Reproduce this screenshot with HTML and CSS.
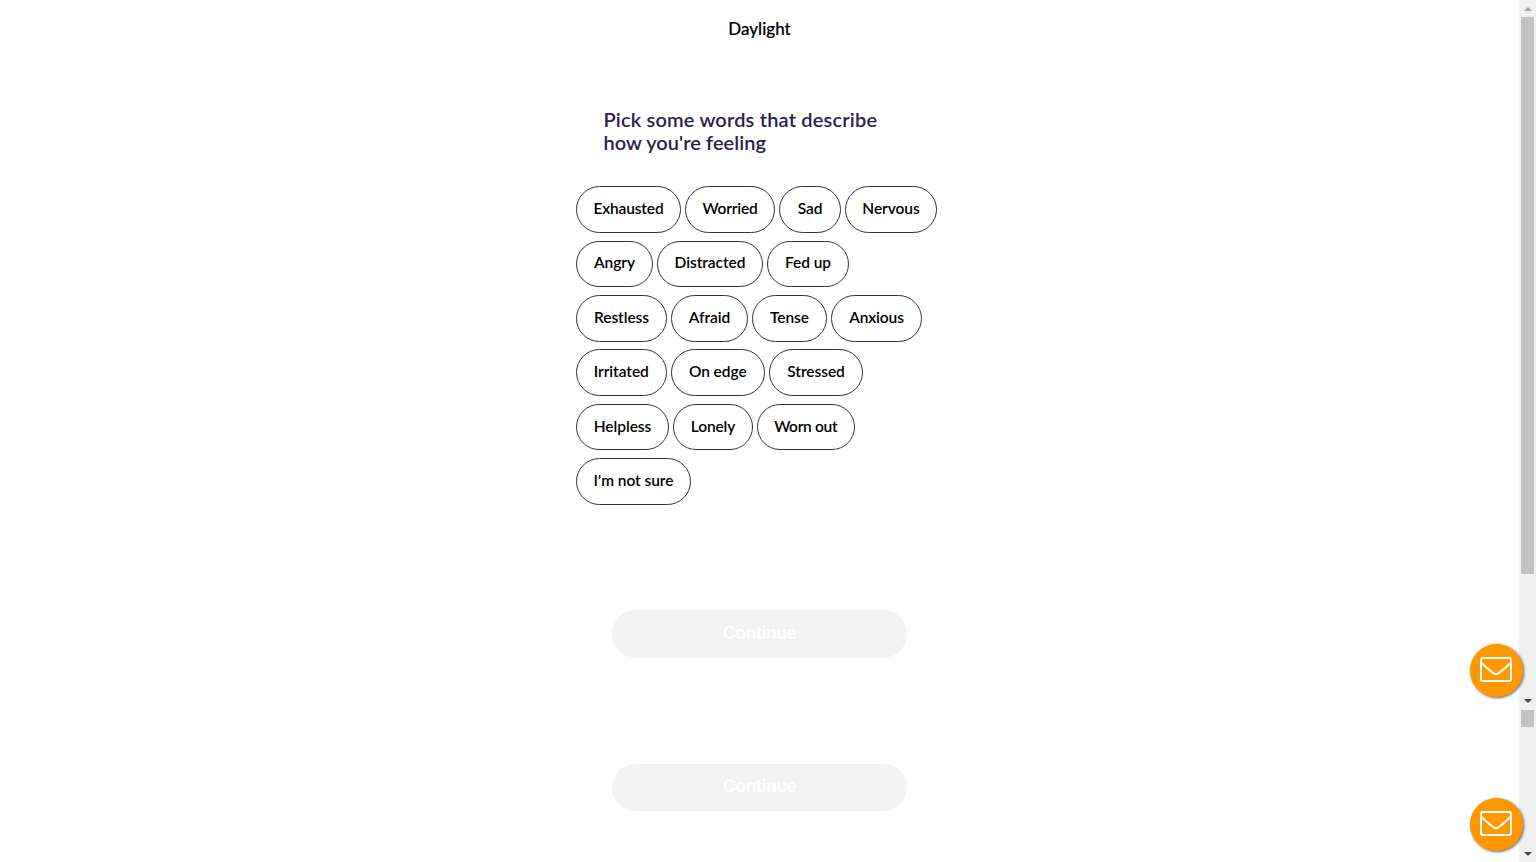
FILE: index.html
```
<!DOCTYPE html>
<html lang="en">
<head>
<meta charset="utf-8">
<title>Daylight</title>
<link rel="stylesheet" href="styles.css">
</head>
<body>
<div class="page">
  <main class="content">
    <header class="brand">Daylight</header>
    <h1 class="question">Pick some words that describe<br><span class="tight">how you're feeling</span></h1>
    <div class="words">
      <div class="row"><button class="pill exhausted">Exhausted</button><button class="pill worried">Worried</button><button class="pill sad">Sad</button><button class="pill nervous">Nervous</button></div>
      <div class="row"><button class="pill angry">Angry</button><button class="pill distracted">Distracted</button><button class="pill fedup">Fed up</button></div>
      <div class="row"><button class="pill restless">Restless</button><button class="pill afraid">Afraid</button><button class="pill tense">Tense</button><button class="pill anxious">Anxious</button></div>
      <div class="row"><button class="pill irritated">Irritated</button><button class="pill onedge">On edge</button><button class="pill stressed">Stressed</button></div>
      <div class="row"><button class="pill helpless">Helpless</button><button class="pill lonely">Lonely</button><button class="pill wornout">Worn out</button></div>
      <div class="row"><button class="pill notsure">I'm not sure</button></div>
    </div>
    <button class="continue">Continue</button>
    <button class="continue second">Continue</button>
  </main>
  <aside class="scrollbar">
    <svg class="arrow up" viewBox="0 0 8 4"><path d="M0 4 4 0 8 4z"/></svg>
    <div class="thumb"></div>
    <svg class="arrow mid" viewBox="0 0 8 4"><path d="M0 0h8L4 4z"/></svg>
    <div class="thumb short"></div>
    <svg class="arrow end" viewBox="0 0 8 4"><path d="M0 0h8L4 4z"/></svg>
  </aside>
  <button class="mail" aria-label="Messages"><svg viewBox="0 0 32 25"><rect x="1" y="1" width="30" height="23" rx="2"/><path d="M1 5.500C5 9.500 9 13 13.500 16.300Q16 18 18.500 16.300C23 13 27 9.500 31 5.500"/></svg></button>
  <button class="mail lower" aria-label="Messages"><svg viewBox="0 0 32 25"><rect x="1" y="1" width="30" height="23" rx="2"/><path d="M1 5.500C5 9.500 9 13 13.500 16.300Q16 18 18.500 16.300C23 13 27 9.500 31 5.500"/></svg></button>
</div>
</body>
</html>
```
FILE: styles.css
```
* { box-sizing: border-box; }
body { margin: 0; background: #fff; font-family: Lato, "Liberation Sans", sans-serif; }
button { font: inherit; padding: 0; border: 0; }
.page { position: relative; display: flex; height: 862px; overflow: hidden; }
.content { flex: 1; display: flex; flex-direction: column; align-items: center; }
.brand { height: 22px; margin-top: 18px; font-size: 17px; line-height: 22px; font-weight: 500; letter-spacing: 0; color: #000; -webkit-text-stroke: 0.2px #000; }
.question { width: 312px; height: 45px; margin: 68px 0 0; font-size: 20px; line-height: 22.500px; font-weight: 600; letter-spacing: 0.180px; color: #2d2148; white-space: nowrap; }
.tight { letter-spacing: 0.050px; }
.words { display: grid; gap: 7.700px; width: 367px; margin-top: 33.200px; }
.row { display: flex; gap: 4px; height: 46.700px; }
.pill { height: 46.700px; padding-bottom: 3px; border: 1px solid #333; border-radius: 24px; background: #fff; color: #000; font-size: 15.500px; font-weight: 600; letter-spacing: -0.050px; white-space: nowrap; }
.exhausted { width: 105px; letter-spacing: -0.150px; }
.worried { width: 90px; letter-spacing: -0.200px; }
.sad { width: 62px; }
.nervous { width: 92px; }
.angry { width: 77px; }
.distracted { width: 106px; }
.fedup { width: 82px; }
.restless { width: 91px; }
.afraid { width: 77px; }
.tense { width: 75px; }
.anxious { width: 91px; letter-spacing: -0.100px; }
.irritated { width: 90.500px; }
.onedge { width: 94.500px; }
.stressed { width: 94px; }
.helpless { width: 93px; }
.lonely { width: 80px; letter-spacing: -0.100px; }
.wornout { width: 97.500px; letter-spacing: -0.300px; }
.notsure { width: 115px; }
.continue { width: 295px; height: 48px; margin-top: 105.100px; padding-bottom: 1px; border-radius: 24px; background: #f3f3f3; color: #fff; font: bold 17.600px "Liberation Sans", sans-serif; letter-spacing: -0.400px; }
.continue.second { height: 47.500px; margin-top: 105.700px; padding-bottom: 2px; }
.scrollbar { display: flex; flex-direction: column; align-items: center; width: 17px; background: #f0f0f0; }
.arrow { width: 8px; height: 4px; flex: none; fill: #4c4c4c; }
.up { margin-top: 7px; fill: #a3a3a3; }
.thumb { width: 13.500px; height: 557px; margin-top: 5.500px; background: #c1c1c1; }
.mid { margin-top: 125px; }
.thumb.short { height: 17px; margin-top: 7.500px; }
.end { margin-top: 125px; }
.mail { position: absolute; left: 1470px; top: 644px; display: grid; place-items: center; width: 53px; height: 53px; border-radius: 50%; background: #ff9800; box-shadow: 1px 1px 3px #0009; }
.mail svg { width: 32px; height: 25px; fill: none; stroke: #fff; stroke-width: 2; margin-top: -2px; margin-left: -1px; }
.mail.lower { top: 797.500px; }
```
